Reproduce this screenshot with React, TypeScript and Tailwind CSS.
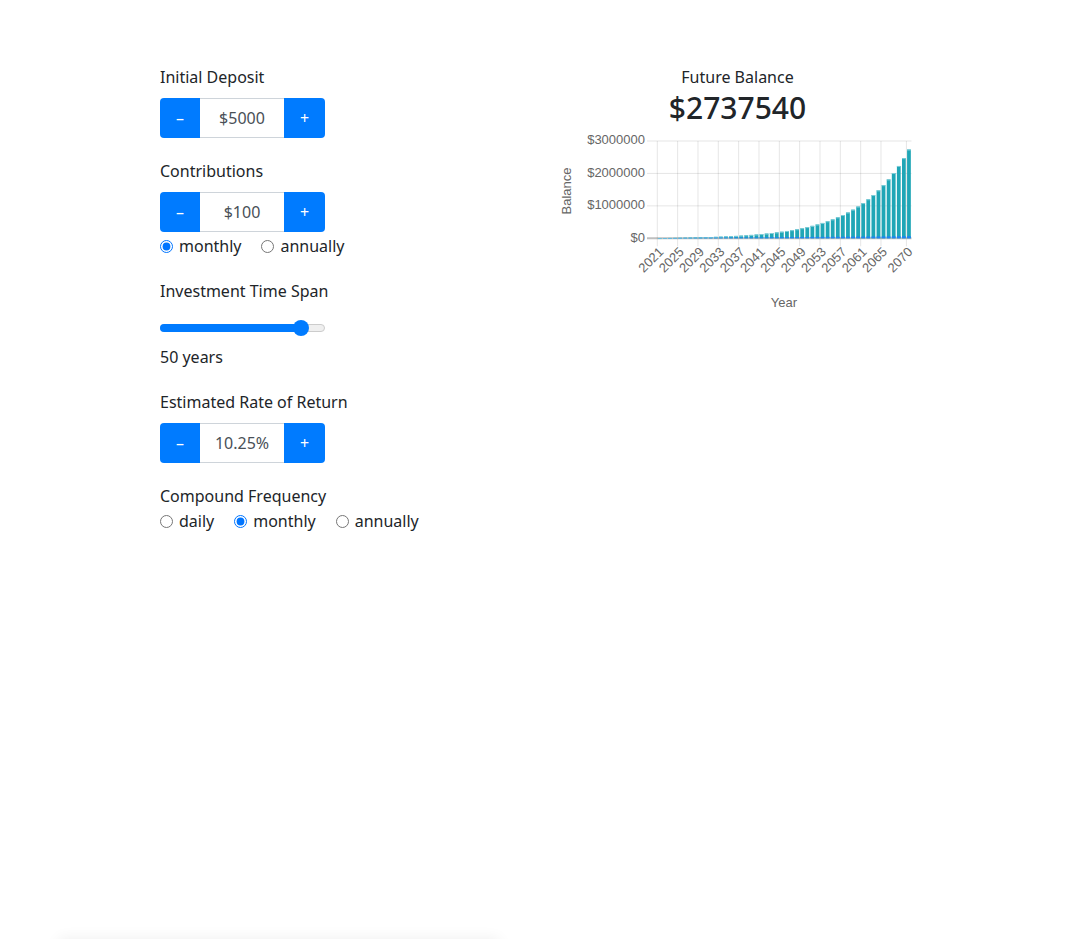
import React from "react";

const YEARS = 50;
const START = 2021;

function buildData() {
  const r = 0.1025 / 12;
  let bal = 5000;
  const out: { total: number; principal: number }[] = [];
  for (let y = 1; y <= YEARS; y++) {
    for (let m = 0; m < 12; m++) bal = bal * (1 + r) + 100;
    out.push({ total: bal, principal: 5000 + 1200 * y });
  }
  return out;
}

function Stepper({ value }: { value: string }) {
  return (
    <div className="flex h-[40px] w-[165px]">
      <button className="w-[40px] rounded-l-[4px] bg-[#007bff] text-white">–</button>
      <div className="flex w-[84px] items-center justify-center border-y border-[#ced4da] text-[#495057]">
        {value}
      </div>
      <button className="w-[41px] rounded-r-[4px] bg-[#007bff] text-white">+</button>
    </div>
  );
}

function Radio({ name, label, checked }: { name: string; label: string; checked?: boolean }) {
  return (
    <label className="mr-[20px] inline-flex items-center">
      <input type="radio" name={name} defaultChecked={checked} className="m-0 mr-[6px] h-[13px] w-[13px] accent-[#0075ff]" />
      {label}
    </label>
  );
}

function Chart() {
  const data = buildData();
  const PL = 97.3;
  const PR = 351.5;
  const PT = 12;
  const PB = 109.3;
  const cw = (PR - PL) / YEARS;
  const bw = cw * 0.74;
  const max = 3000000;
  const yOf = (v: number) => PB - (v / max) * (PB - PT);
  const ticks = [0, 4, 8, 12, 16, 20, 24, 28, 32, 36, 40, 44, 49];
  const yTicks = [3000000, 2000000, 1000000, 0];

  return (
    <svg width="355" height="185" className="mt-[2px] block overflow-visible" style={{ fontFamily: "'Liberation Sans', Arial, sans-serif" }}>
      {yTicks.map((v) => (
        <g key={v}>
          <line x1={87} x2={PR} y1={yOf(v)} y2={yOf(v)} stroke={v === 0 ? "rgba(0,0,0,0.25)" : "rgba(0,0,0,0.1)"} strokeWidth={v === 0 ? 2 : 1} />
          <text x={85} y={yOf(v)} textAnchor="end" dominantBaseline="middle" fontSize="13" fill="#666">
            ${v}
          </text>
        </g>
      ))}
      {ticks.map((i) => (
        <line key={i} x1={PL + i * cw} x2={PL + i * cw} y1={PT} y2={PB + 8} stroke="rgba(0,0,0,0.1)" />
      ))}
      {data.map((d, i) => {
        const x = PL + i * cw + (cw - bw) / 2;
        const yt = yOf(d.total);
        const yp = yOf(d.principal);
        return (
          <g key={i}>
            <rect x={x} y={yt} width={bw} height={PB - yt} fill="#1fa6b6" />
            <rect x={x} y={yt} width={bw} height={1} fill="#7fcdd8" />
            <rect x={x} y={yp} width={bw} height={PB - yp} fill="#1b84f5" />
          </g>
        );
      })}
      {ticks.map((i) => {
        const cx = PL + (i + 0.5) * cw + 2;
        const cy = PB + 12;
        return (
          <text key={i} x={cx} y={cy} textAnchor="end" dominantBaseline="middle" fontSize="13" fill="#666" transform={`rotate(-45 ${cx} ${cy})`}>
            {START + i}
          </text>
        );
      })}
      <text x={11} y={62} textAnchor="middle" fontSize="13" fill="#666" transform="rotate(-90 11 62)">
        Balance
      </text>
      <text x={224} y={178} textAnchor="middle" fontSize="13" fill="#666">
        Year
      </text>
    </svg>
  );
}

export default function App() {
  return (
    <div className="bg-white text-[16px] leading-[24px] text-[#212529]" style={{ fontFamily: "'Noto Sans', 'Open Sans', sans-serif" }}>
      <div className="flex h-[939px] pt-[65px]">
        <div className="w-[560px] pl-[160px]">
          <div className="mb-[9px]">Initial Deposit</div>
          <Stepper value="$5000" />

          <div className="mb-[9px] mt-[21px]">Contributions</div>
          <Stepper value="$100" />
          <div className="mt-[2px] flex">
            <Radio name="contrib" label="monthly" checked />
            <Radio name="contrib" label="annually" />
          </div>

          <div className="mt-[21px]">Investment Time Span</div>
          <div className="relative mt-[17px] h-[16px] w-[165px]">
            <div className="absolute left-0 top-[4px] h-[8px] w-[165px] rounded-full border border-[#ccc] bg-[#efefef]" />
            <div className="absolute left-0 top-[4px] h-[8px] w-[145px] rounded-full bg-[#007bff]" />
            <div className="absolute left-[133px] top-0 h-[16px] w-[16px] rounded-full bg-[#007bff]" />
          </div>
          <div className="mt-[9px]">50 years</div>

          <div className="mb-[9px] mt-[21px]">Estimated Rate of Return</div>
          <Stepper value="10.25%" />

          <div className="mt-[21px]">Compound Frequency</div>
          <div className="mt-[1px] flex">
            <Radio name="freq" label="daily" />
            <Radio name="freq" label="monthly" checked />
            <Radio name="freq" label="annually" />
          </div>
        </div>

        <div className="flex w-[355px] flex-col items-center">
          <div>Future Balance</div>
          <div className="text-[30px] font-medium leading-[38px]">$2737540</div>
          <Chart />
        </div>
      </div>
      <div className="ml-[59px] h-[200px] w-[440px] shadow-[0_0_14px_rgba(0,0,0,0.07)]" />
    </div>
  );
}
